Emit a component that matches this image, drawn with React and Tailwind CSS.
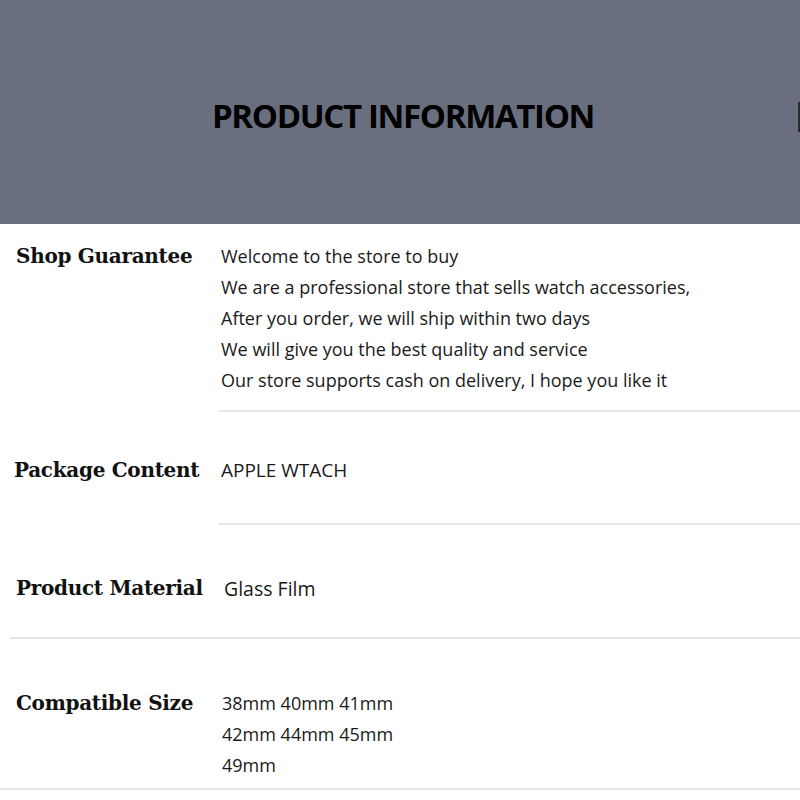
import React from "react";

// Lembar info produk: header abu-abu + tabel label/isi
const rows = [
  {
    label: "Shop Guarantee",
    lines: [
      "Welcome to the store to buy",
      "We are a professional store that sells watch accessories,",
      "After you order, we will ship within two days",
      "We will give you the best quality and service",
      "Our store supports cash on delivery, I hope you like it",
    ],
    pad: "pt-[17px] pb-[14px]",
    line: "ml-[219px]",
    size: "text-[18px]",
  },
  {
    label: "Package Content",
    lines: ["APPLE WTACH"],
    pad: "pt-[43px] pb-[37px]",
    line: "ml-[219px]",
    size: "text-[19px]",
    labelPad: "pl-[14px]",
  },
  {
    label: "Product Material",
    lines: ["Glass Film"],
    pad: "pt-[48px] pb-[33px]",
    line: "ml-[10px]",
    size: "text-[19.5px]",
    indent: "pl-[3px]",
  },
  {
    label: "Compatible Size",
    lines: ["38mm 40mm 41mm", "42mm 44mm 45mm", "49mm"],
    pad: "pt-[49px] pb-[7px]",
    line: "ml-0",
    size: "text-[18px] pl-px",
  },
];

export default function App() {
  return (
    <div className="w-[800px] h-[800px] bg-white overflow-hidden">
      <div className="relative h-[224px] bg-[#6a6f80] flex items-center justify-center pt-[8px]">
        <h1 className="font-['Open_Sans',sans-serif] font-bold text-[33px] tracking-[-1.35px] text-black ml-[6px]">
          PRODUCT INFORMATION
        </h1>
        <div className="absolute right-0 top-[102px] w-[2px] h-[30px] bg-[#2a2a2a]" />
      </div>

      {rows.map((row) => (
        <div key={row.label}>
          <div className={`flex items-start ${row.pad}`}>
            <div className={`w-[221px] shrink-0 ${row.labelPad || "pl-[16px]"} font-['DejaVu_Serif',serif] font-bold text-[20px] leading-[31px] text-[#111] tracking-[-0.3px]`}>
              {row.label}
            </div>
            <div className={`font-['Open_Sans',sans-serif] ${row.size} leading-[31px] text-[#1a1a1a] ${row.indent || ""}`}>
              {row.lines.map((l) => (
                <div key={l}>{l}</div>
              ))}
            </div>
          </div>
          <div className={`h-[2px] bg-[#e6e6e6] ${row.line}`} />
        </div>
      ))}
    </div>
  );
}
